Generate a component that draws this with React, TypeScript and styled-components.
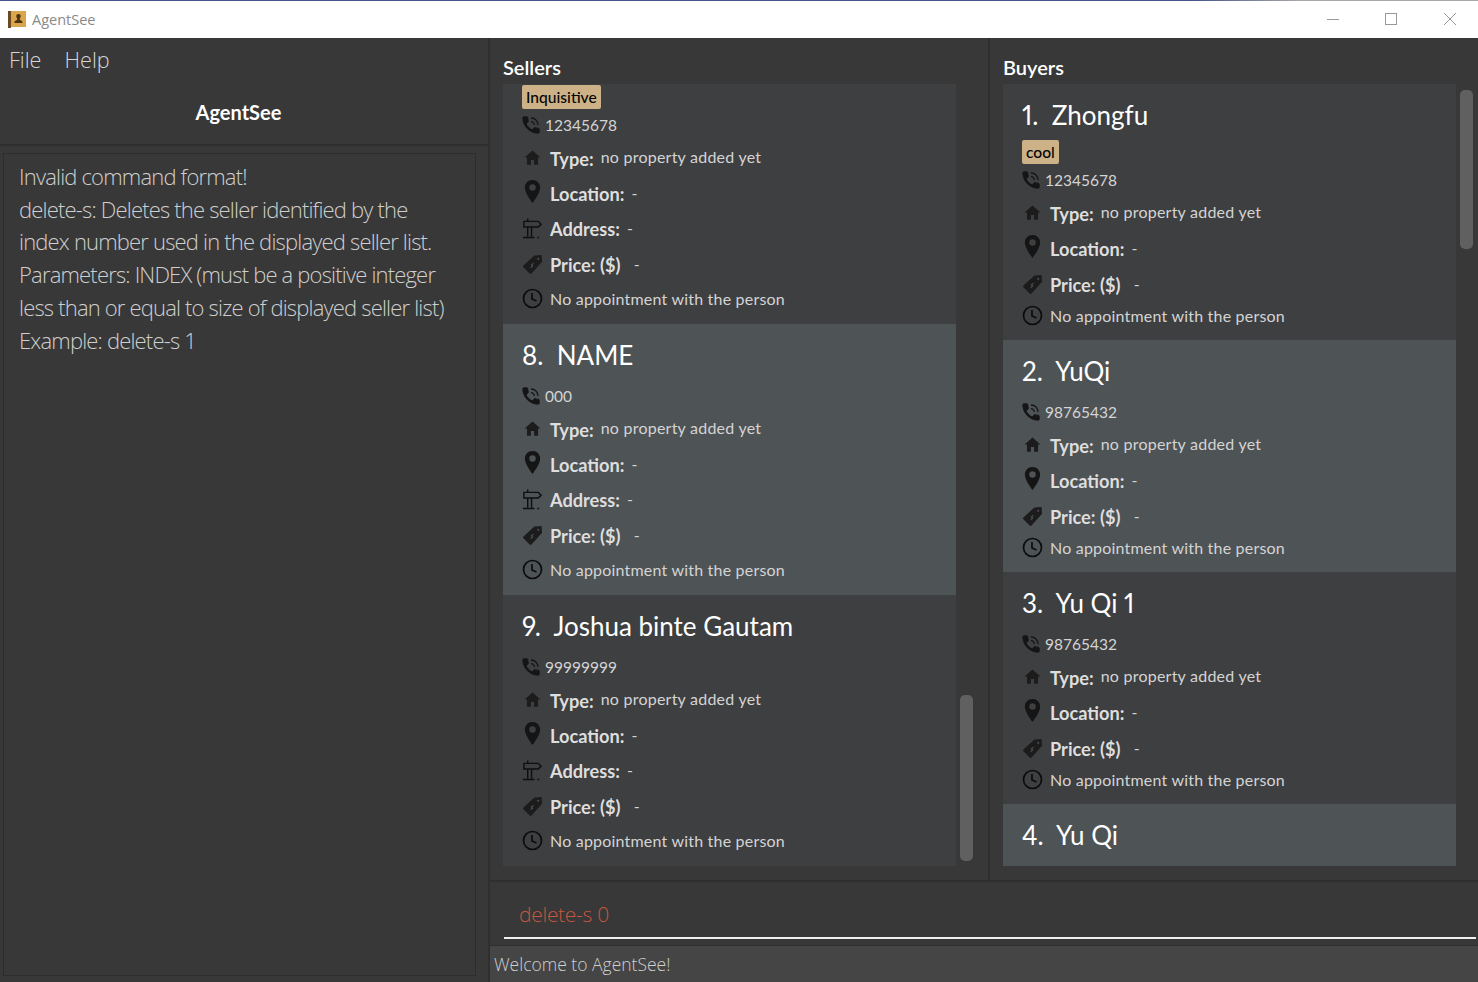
import React from "react";
import styled, { createGlobalStyle } from "styled-components";

const Global = createGlobalStyle`
  html, body { margin: 0; padding: 0; background: #383838; overflow: hidden; }
  * { box-sizing: border-box; }
`;

const UI = `"Open Sans", "Noto Sans", "Liberation Sans", sans-serif`;
const CARD = `Lato, "Noto Sans", "Liberation Sans", sans-serif`;

const Page = styled.div`
  width: 1478px; height: 982px; display: flex; flex-direction: column; overflow: hidden;
  background: #383838; font-family: ${UI};
`;
const TitleBar = styled.header`
  height: 38px; flex: none; background: #fff; display: flex; align-items: center; padding-left: 8px;
  border-top: 1px solid #46528a; border-image: linear-gradient(to right, #46528a 1190px, #a8a8a8 1300px) 1;
  color: #8a8a8a; font-size: 14.5px; font-family: ${UI};
`;
const AppName = styled.span` margin-left: 6px; `;
const WinButtons = styled.div`
  margin-left: auto; display: flex; align-items: center; padding-bottom: 2px;
`;
const WinButton = styled.div`
  width: 58.5px; height: 36px; display: flex; align-items: center; justify-content: center; padding-left: 2px;
`;
const Body = styled.div` flex: 1; display: flex; min-height: 0; `;
const LeftPane = styled.aside`
  width: 490px; flex: none; display: flex; flex-direction: column; border-right: 2px solid #2f2f2f;
`;
const MenuBar = styled.nav`
  display: flex; gap: 23px; padding: 7px 0 0 9px; height: 45px;
  color: #d6d6d6; font-size: 21.6px; font-weight: 300; line-height: 30px;
`;
const Heading = styled.h1`
  margin: 0; height: 63px; text-align: center; padding: 12px 11px 0 0; color: #fff; font-family: ${CARD};
  font-size: 20px; font-weight: 700; line-height: 34px; border-bottom: 2px solid #2f2f2f;
`;
const ResultBox = styled.div`
  flex: none; margin: 7px 0 0 3px; width: 473px; height: 823px; border: 1px solid #2d2d2d;
  padding: 6px 15px; color: #cfcfcf; font-size: 22px; font-weight: 300; line-height: 32.7px; letter-spacing: -0.82px;
`;
const RightPane = styled.main` flex: 1; display: flex; flex-direction: column; min-width: 0; `;
const Columns = styled.div`
  height: 844px; flex: none; display: flex; border-bottom: 2px solid #2f2f2f;
`;
const ListColumn = styled.section<{ $divider?: boolean }>`
  flex: none; width: ${(p) => (p.$divider ? "500px" : "488px")}; padding-left: 13px; display: flex; flex-direction: column;
  border-right: ${(p) => (p.$divider ? "2px solid #2f2f2f" : "none")};
`;
const ColumnTitle = styled.h2`
  margin: 0; height: 46px; padding-top: 17px; color: #fff; font-family: ${CARD}; font-size: 20px; font-weight: 600; line-height: 24px;
`;
const ListRow = styled.div` display: flex; height: 782px; `;
const List = styled.div` width: 453px; flex: none; height: 782px; overflow: hidden; background: #3e3f41; `;
const Track = styled.div<{ $top: number }>` width: 32px; padding: ${(p) => p.$top}px 0 0 4px; `;
const Thumb = styled.div<{ $h: number }>` width: 13px; height: ${(p) => p.$h}px; background: #606060; border-radius: 5px; `;
const Card = styled.article<{ $alt?: boolean; $seller?: boolean }>`
  padding: 0 0 ${(p) => (p.$seller ? 13 : 10)}px 19px;
  background: ${(p) => (p.$alt ? "#4e5356" : "#3e3f41")};
`;
const Name = styled.div`
  height: 56px; padding-top: 6px; font-family: ${CARD}; color: #fff; font-size: 26px; font-weight: 400; line-height: 50px; display: flex; white-space: pre;
  font-feature-settings: "pnum";
`;
const TagRow = styled.div<{ $h: number; $mt: number }>` height: ${(p) => p.$h}px; display: flex; align-items: flex-start; padding-top: ${(p) => p.$mt}px; `;
const Tag = styled.span`
  height: 24px; padding: 0 4.5px 0 4px; background: #cdb287; color: #050505; border-radius: 2px; font-size: 15.6px; font-family: ${CARD}; font-weight: 500; line-height: 24px;
`;
const Row = styled.div<{ $h: number }>`
  height: ${(p) => p.$h}px; display: flex; align-items: center; color: #d8d8d8; font-family: ${CARD};
`;
const IconSlot = styled.span`
  width: 28px; flex: none; display: flex; align-items: center; justify-content: center; padding-right: 7px;
  svg { flex: none; }
`;
const PinSlot = styled(IconSlot)` margin-top: -3px; `;
const PhoneSlot = styled(IconSlot)` width: 23px; padding-right: 0; justify-content: flex-start; margin-left: -1px; margin-right: 1px; `;
const PhoneText = styled.span` font-size: 15.5px; color: #d4d4d4; `;
const Label = styled.span` font-size: 18.2px; font-weight: 700; color: #dedede; margin-top: 2px; `;
const TypeLabel = styled(Label)` margin-top: 4px; `;
const Value = styled.span` font-size: 16px; font-weight: 400; color: #d4d4d4; margin: -2px 0 0 7px; letter-spacing: 0.23px; `;
const PriceValue = styled(Value)` margin-left: 9px; `;
const Appt = styled.span` font-size: 16px; color: #d4d4d4; letter-spacing: 0.2px; `;
const BottomBar = styled.div`
  height: 63px; flex: none; padding: 0 2px 6px 14px; display: flex; flex-direction: column; justify-content: flex-end;
`;
const Command = styled.div`
  height: 40px; border-bottom: 2px solid #f0f0f0; padding-left: 15px; color: #c6563f; font-size: 21px; font-weight: 300; line-height: 30px; letter-spacing: -0.3px;
`;
const StatusBar = styled.footer`
  flex: 1; background: #454545; border-top: 1px solid #2f2f2f; padding-left: 4px; color: #cfcfcf; font-size: 17.5px; font-weight: 300; line-height: 37px;
`;

const Phone = () => (
  <svg width="20" height="20" viewBox="1 1 22 22" fill="#151515">
    <path stroke="#151515" strokeWidth="1" d="M20 15.5c-1.25 0-2.45-.2-3.57-.57-.35-.11-.74-.03-1.02.24l-2.2 2.2c-2.83-1.44-5.15-3.75-6.59-6.59l2.2-2.21c.28-.26.36-.65.25-1C8.7 6.45 8.5 5.25 8.5 4c0-.55-.45-1-1-1H4c-.55 0-1 .45-1 1 0 9.39 7.61 17 17 17 .55 0 1-.45 1-1v-3.5c0-.55-.45-1-1-1z" />
    <path d="M19 12h1.4c0-4.6-3.8-8.4-8.4-8.4v1.4c3.87 0 7 3.13 7 7zm-4 0h1.4c0-2.4-2-4.4-4.4-4.4v1.4c1.66 0 3 1.34 3 3z" />
  </svg>
);
const Home = () => (
  <svg width="19" height="19" viewBox="0 0 24 24" fill="#1c1c1c"><path d="M10 21v-6h4v6h5v-9h3L12 3 2 12h3v9z" /></svg>
);
const Pin = () => (
  <svg width="21" height="26" viewBox="1 0 22 27" fill="#151515"><path d="M12 1C7.2 1 4 4.6 4 9c0 5.6 8 16 8 16s8-10.4 8-16c0-4.4-3.2-8-8-8zm0 11.2a3.4 3.4 0 1 1 0-6.8 3.4 3.4 0 0 1 0 6.8z" /></svg>
);
const Sign = () => (
  <svg width="21" height="23" viewBox="0 0 22 23" fill="none" stroke="#0f0f0f" strokeWidth="1.5"><path d="M2 4h15l3 3-3 3H2zM6 1V4M6 10v10M10 10v10M1 21h12M16 21h2" /></svg>
);
const PriceTag = () => (
  <svg width="21" height="21" viewBox="0 0 22 22"><path d="M13 1.5l7.5-.5.5 7L10 20.5a1.4 1.4 0 0 1-2 0L1.5 14a1.4 1.4 0 0 1 0-2z" fill="#1c1c1c" /><path d="M9 14l2-1-1-2 2-1" fill="none" stroke="#666" strokeWidth="1" /><circle cx="17" cy="5" r="1.2" fill="#4a4a4a" /></svg>
);
const Clock = () => (
  <svg width="21" height="21" viewBox="0 0 21 21" fill="none" stroke="#0c0c0c" strokeWidth="1.7"><circle cx="10.5" cy="10.5" r="9" /><path d="M10 5v6l4.5 2" /></svg>
);

type Person = { index?: number; name?: string; tag?: string; phone?: string; alt?: boolean };

const PersonCard = ({ p, seller }: { p: Person; seller?: boolean }) => (
  <Card $alt={p.alt} $seller={seller}>
    {p.name && <Name>{`${p.index}.  ${p.name}`}</Name>}
    {p.tag && <TagRow $h={seller ? 25 : 24} $mt={seller ? 1 : 0}><Tag>{p.tag}</Tag></TagRow>}
    {p.phone && (
      <>
        <Row $h={32}><PhoneSlot><Phone /></PhoneSlot><PhoneText>{p.phone}</PhoneText></Row>
        <Row $h={32}><IconSlot><Home /></IconSlot><TypeLabel>Type:</TypeLabel><Value>no property added yet</Value></Row>
        <Row $h={40}><PinSlot><Pin /></PinSlot><Label>Location:</Label><Value>-</Value></Row>
        {seller && <Row $h={30}><IconSlot><Sign /></IconSlot><Label>Address:</Label><Value>-</Value></Row>}
        <Row $h={seller ? 42 : 32}><IconSlot><PriceTag /></IconSlot><Label>Price: ($)</Label><PriceValue>&nbsp;-</PriceValue></Row>
        <Row $h={seller ? 26 : 30}><IconSlot><Clock /></IconSlot><Appt>No appointment with the person</Appt></Row>
      </>
    )}
  </Card>
);

const sellers: Person[] = [
  { tag: "Inquisitive", phone: "12345678" },
  { index: 8, name: "NAME", phone: "000", alt: true },
  { index: 9, name: "Joshua binte Gautam", phone: "99999999" },
];
const buyers: Person[] = [
  { index: 1, name: "Zhongfu", tag: "cool", phone: "12345678" },
  { index: 2, name: "YuQi", phone: "98765432", alt: true },
  { index: 3, name: "Yu Qi 1", phone: "98765432" },
  { index: 4, name: "Yu Qi", alt: true },
];

const resultLines = [
  "Invalid command format!",
  "delete-s: Deletes the seller identified by the",
  "index number used in the displayed seller list.",
  "Parameters: INDEX (must be a positive integer",
  "less than or equal to size of displayed seller list)",
  "Example: delete-s 1",
];

export default function App() {
  return (
    <Page>
      <Global />
      <TitleBar>
        <svg width="18" height="17" viewBox="0 0 18 17"><rect x="0" y="0" width="18" height="16" fill="#d9a64e" /><rect x="0" y="0" width="3" height="17" fill="#6b4a22" /><path d="M10.5 3a2.3 2.3 0 0 1 2.2 2.6c-.2 1.2-.9 2-1 2.6 0 1 2.8 1.2 2.8 3V12H6.5v-.8c0-1.8 2.8-2 2.8-3-.1-.6-.8-1.4-1-2.6A2.3 2.3 0 0 1 10.5 3z" fill="#4a3212" /></svg>
        <AppName>AgentSee</AppName>
        <WinButtons>
          <WinButton><svg width="12" height="12"><path d="M0 6.5h12" stroke="#999" /></svg></WinButton>
          <WinButton><svg width="12" height="12"><rect x=".5" y=".5" width="11" height="11" fill="none" stroke="#999" /></svg></WinButton>
          <WinButton><svg width="12" height="12"><path d="M0 0l12 12M12 0L0 12" stroke="#999" /></svg></WinButton>
        </WinButtons>
      </TitleBar>
      <Body>
        <LeftPane>
          <MenuBar><span>File</span><span>Help</span></MenuBar>
          <Heading>AgentSee</Heading>
          <ResultBox>{resultLines.map((l) => <div key={l}>{l}</div>)}</ResultBox>
        </LeftPane>
        <RightPane>
          <Columns>
            <ListColumn $divider>
              <ColumnTitle>Sellers</ColumnTitle>
              <ListRow>
                <List>{sellers.map((p, i) => <PersonCard key={i} p={p} seller />)}</List>
                <Track $top={611}><Thumb $h={166} /></Track>
              </ListRow>
            </ListColumn>
            <ListColumn>
              <ColumnTitle>Buyers</ColumnTitle>
              <ListRow>
                <List>{buyers.map((p, i) => <PersonCard key={i} p={p} />)}</List>
                <Track $top={6}><Thumb $h={159} /></Track>
              </ListRow>
            </ListColumn>
          </Columns>
          <BottomBar><Command>delete-s 0</Command></BottomBar>
          <StatusBar>Welcome to AgentSee!</StatusBar>
        </RightPane>
      </Body>
    </Page>
  );
}
